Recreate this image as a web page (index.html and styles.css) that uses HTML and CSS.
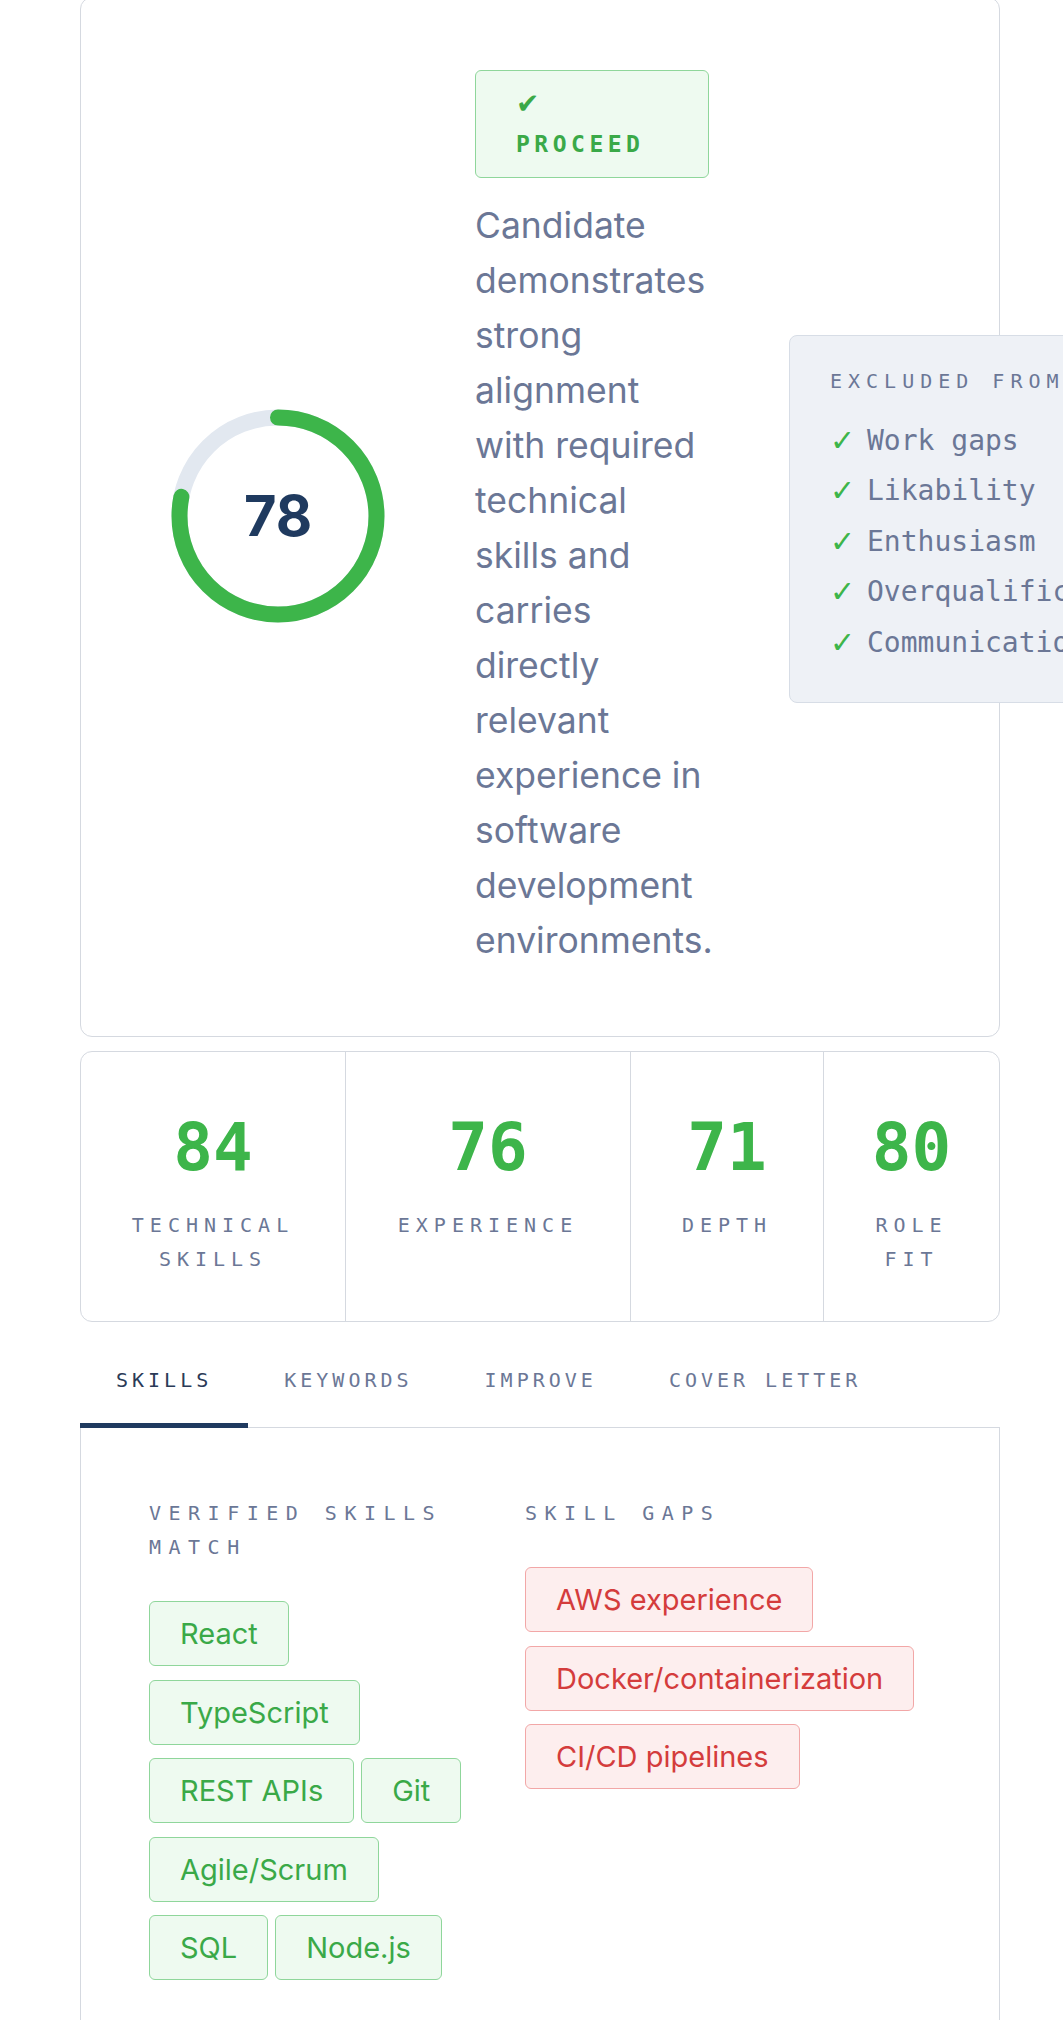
FILE: index.html
```html
<!DOCTYPE html>
<html lang="en">
<head>
  <meta charset="UTF-8">
  <meta name="viewport" content="width=device-width, initial-scale=1.0">
  <title>Candidate Screening Result</title>
  <link rel="stylesheet" href="styles.css">
</head>
<body>
  <div class="container">
    <section class="result-card">
      <div class="score">
        <svg class="score-ring" width="214" height="214" viewBox="0 0 214 214">
          <circle cx="107" cy="107" r="98.5" fill="none" stroke="#e2e8f0" stroke-width="16" />
          <circle cx="107" cy="107" r="98.5" fill="none" stroke="#3db54a" stroke-width="16"
            stroke-linecap="round" stroke-dasharray="482.7 618.9" transform="rotate(-90 107 107)" />
        </svg>
        <span class="score-value">78</span>
      </div>

      <div class="verdict">
        <div class="badge"><span class="badge-tick">✔</span> PROCEED</div>
        <p class="summary">Candidate demonstrates strong alignment with required technical skills and carries directly relevant experience in software development environments.</p>
      </div>

      <aside class="excluded">
        <h4>Excluded from scoring</h4>
        <ul>
          <li><span class="tick">✓</span>Work gaps</li>
          <li><span class="tick">✓</span>Likability</li>
          <li><span class="tick">✓</span>Enthusiasm</li>
          <li><span class="tick">✓</span>Overqualification</li>
          <li><span class="tick">✓</span>Communication style</li>
        </ul>
      </aside>
    </section>

    <section class="stats">
      <div class="stat">
        <div class="stat-value">84</div>
        <div class="stat-label">Technical Skills</div>
      </div>
      <div class="stat">
        <div class="stat-value">76</div>
        <div class="stat-label">Experience</div>
      </div>
      <div class="stat">
        <div class="stat-value">71</div>
        <div class="stat-label">Depth</div>
      </div>
      <div class="stat">
        <div class="stat-value">80</div>
        <div class="stat-label">Role Fit</div>
      </div>
    </section>

    <nav class="tabs">
      <button class="tab active">Skills</button>
      <button class="tab">Keywords</button>
      <button class="tab">Improve</button>
      <button class="tab">Cover Letter</button>
    </nav>

    <section class="tab-panel">
      <div class="skill-group">
        <h4>Verified Skills Match</h4>
        <div class="tags">
          <span class="tag match">React</span>
          <span class="tag match">TypeScript</span>
          <span class="tag match">REST APIs</span>
          <span class="tag match">Git</span>
          <span class="tag match">Agile/Scrum</span>
          <span class="tag match">SQL</span>
          <span class="tag match">Node.js</span>
        </div>
      </div>
      <div class="skill-group">
        <h4>Skill Gaps</h4>
        <div class="tags">
          <span class="tag gap">AWS experience</span>
          <span class="tag gap">Docker/containerization</span>
          <span class="tag gap">CI/CD pipelines</span>
        </div>
      </div>
    </section>
  </div>
</body>
</html>
```

FILE: styles.css
```css
html, body {
  overflow-x: hidden;
}
body {
  font-family: "Inter", "Liberation Sans", sans-serif;
  margin: 0;
  padding: 0;
  background: #fff;
  color: #6b7796;
}
.container {
  width: 920px;
  margin-left: 80px;
}

/* result card */
.result-card {
  margin-top: -3px;
  display: grid;
  grid-template-columns: 314px 238px max-content;
  column-gap: 40px;
  align-items: center;
  padding: 72px 40px 68px;
  border: 1px solid #d5d9e0;
  border-radius: 12px;
  background: #fff;
}
.score {
  position: relative;
  width: 214px;
  height: 214px;
  justify-self: center;
  margin-bottom: 7px;
}
.score-ring {
  display: block;
}
.score-value {
  position: absolute;
  inset: 0;
  display: flex;
  align-items: center;
  justify-content: center;
  font-size: 56px;
  font-weight: 700;
  color: #1f3a5f;
}
.badge {
  width: 234px;
  box-sizing: border-box;
  padding: 13px 40px;
  border: 1.5px solid #8fd69b;
  border-radius: 6px;
  background: #eefaf0;
  color: #3aa948;
  font-family: "DejaVu Sans Mono", "Liberation Mono", monospace;
  font-size: 23px;
  font-weight: 700;
  letter-spacing: 4.5px;
  line-height: 39px;
}
.badge-tick {
  font-family: "DejaVu Sans", sans-serif;
  font-size: 28px;
  font-weight: 400;
  letter-spacing: 0;
}
.summary {
  margin: 20px 0 0;
  font-size: 35.5px;
  line-height: 55px;
  color: #6b7796;
}
.excluded {
  margin-left: 36px;
  padding: 30px 40px 34px;
  background: #eef1f6;
  border: 1px solid #d7dde6;
  border-radius: 8px;
  font-family: "DejaVu Sans Mono", "Liberation Mono", monospace;
}
.excluded h4 {
  margin: 0 0 20px;
  font-size: 20px;
  font-weight: 400;
  line-height: 30px;
  letter-spacing: 6px;
  text-transform: uppercase;
  white-space: nowrap;
  color: #6b7796;
}
.excluded ul {
  list-style: none;
  margin: 0;
  padding: 0;
}
.excluded li {
  display: flex;
  font-size: 28px;
  line-height: 50.5px;
  white-space: nowrap;
}
.tick {
  width: 37px;
  color: #3db54a;
  font-family: "DejaVu Sans", sans-serif;
  font-size: 30px;
  font-weight: 700;
}

/* score breakdown */
.stats {
  display: grid;
  grid-template-columns: 264px 285px 193px 176px;
  margin-top: 14px;
  border: 1px solid #d5d9e0;
  border-radius: 12px;
}
.stat {
  padding: 63px 20px 45px;
  text-align: center;
}
.stat + .stat {
  border-left: 1px solid #d5d9e0;
}
.stat-value {
  font-family: "DejaVu Sans Mono", "Liberation Mono", monospace;
  font-size: 66px;
  font-weight: 700;
  line-height: 66px;
  color: #3db54a;
}
.stat-label {
  margin-top: 27px;
  font-family: "DejaVu Sans Mono", "Liberation Mono", monospace;
  font-size: 20px;
  line-height: 34px;
  letter-spacing: 6px;
  text-transform: uppercase;
  color: #6b7796;
}

/* tabs */
.tabs {
  display: flex;
  margin-top: 24px;
}
.tab {
  padding: 17px 36px 26px;
  border: none;
  border-bottom: 5px solid transparent;
  background: none;
  font-family: "DejaVu Sans Mono", "Liberation Mono", monospace;
  font-size: 20px;
  line-height: 34px;
  letter-spacing: 4px;
  text-transform: uppercase;
  color: #6b7796;
  cursor: pointer;
}
.tab.active {
  color: #2a3a57;
  border-bottom-color: #1f3a5f;
}
.tab-panel {
  display: grid;
  grid-template-columns: 328px 1fr;
  column-gap: 48px;
  padding: 68px 68px;
  border: 1px solid #d5d9e0;
  margin-top: -1px;
}
.skill-group h4 {
  margin: 0 0 37px;
  font-family: "DejaVu Sans Mono", "Liberation Mono", monospace;
  font-size: 20px;
  font-weight: 400;
  line-height: 34px;
  letter-spacing: 7.5px;
  text-transform: uppercase;
  color: #6b7796;
}
.tags {
  display: flex;
  flex-wrap: wrap;
  align-items: flex-start;
  row-gap: 13.5px;
  column-gap: 7px;
}
.tag {
  padding: 0 30px;
  border-radius: 6px;
  font-size: 29px;
  line-height: 63px;
}
.tag.match {
  background: #eefaf0;
  border: 1.5px solid #8fd69b;
  color: #3aa948;
}
.tag.gap {
  background: #fdeeee;
  border: 1.5px solid #f2a7a7;
  color: #d43c3c;
}
```
